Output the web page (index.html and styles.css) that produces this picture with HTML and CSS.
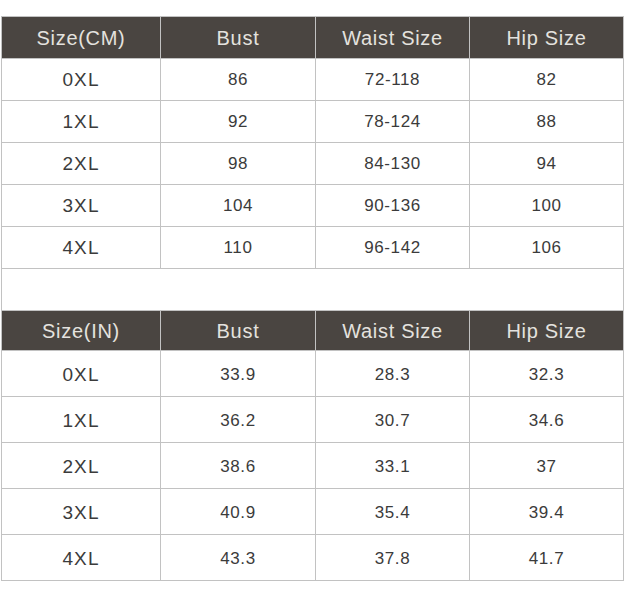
FILE: index.html
```html
<!DOCTYPE html>
<html>
<head>
<meta charset="utf-8">
<link rel="stylesheet" href="styles.css">
</head>
<body>
<div class="chart">
  <div class="cell head">Size(CM)</div>
  <div class="cell head">Bust</div>
  <div class="cell head">Waist Size</div>
  <div class="cell head">Hip Size</div>

  <div class="cell size">0XL</div><div class="cell num">86</div><div class="cell num">72-118</div><div class="cell num">82</div>
  <div class="cell size">1XL</div><div class="cell num">92</div><div class="cell num">78-124</div><div class="cell num">88</div>
  <div class="cell size">2XL</div><div class="cell num">98</div><div class="cell num">84-130</div><div class="cell num">94</div>
  <div class="cell size">3XL</div><div class="cell num">104</div><div class="cell num">90-136</div><div class="cell num">100</div>
  <div class="cell size">4XL</div><div class="cell num">110</div><div class="cell num">96-142</div><div class="cell num">106</div>

  <div class="cell spacer"></div>

  <div class="cell head">Size(IN)</div>
  <div class="cell head">Bust</div>
  <div class="cell head">Waist Size</div>
  <div class="cell head">Hip Size</div>

  <div class="cell size low">0XL</div><div class="cell num low">33.9</div><div class="cell num low">28.3</div><div class="cell num low">32.3</div>
  <div class="cell size low">1XL</div><div class="cell num low">36.2</div><div class="cell num low">30.7</div><div class="cell num low">34.6</div>
  <div class="cell size low">2XL</div><div class="cell num low">38.6</div><div class="cell num low">33.1</div><div class="cell num low">37</div>
  <div class="cell size low">3XL</div><div class="cell num low">40.9</div><div class="cell num low">35.4</div><div class="cell num low">39.4</div>
  <div class="cell size low">4XL</div><div class="cell num low">43.3</div><div class="cell num low">37.8</div><div class="cell num low">41.7</div>
</div>
</body>
</html>
```
FILE: styles.css
```css
html, body {
  margin: 0;
  padding: 0;
  background: #ffffff;
}

body {
  font-family: "Liberation Sans", Arial, sans-serif;
}

.chart {
  margin: 16px 0 0 1px;
  width: 623px;
  box-sizing: border-box;
  display: grid;
  grid-template-columns: 158px 154px 153px 153px;
  grid-template-rows: 41px repeat(5, 41px) 41px 39px repeat(5, 45px);
  gap: 1px;
  padding: 1px;
  background: #c2c2c2;
}

.cell {
  display: flex;
  align-items: center;
  justify-content: center;
  background: #ffffff;
  color: #3b3b3b;
}

.head {
  background: #4a4541;
  color: #e4e2df;
  font-size: 20px;
  letter-spacing: 0.7px;
  padding-top: 1px;
}

.size {
  font-size: 19px;
  letter-spacing: 1.1px;
}

.num {
  font-size: 17px;
  letter-spacing: 0.6px;
}

.low {
  padding-top: 3px;
}

.spacer {
  grid-column: 1 / -1;
}
```
